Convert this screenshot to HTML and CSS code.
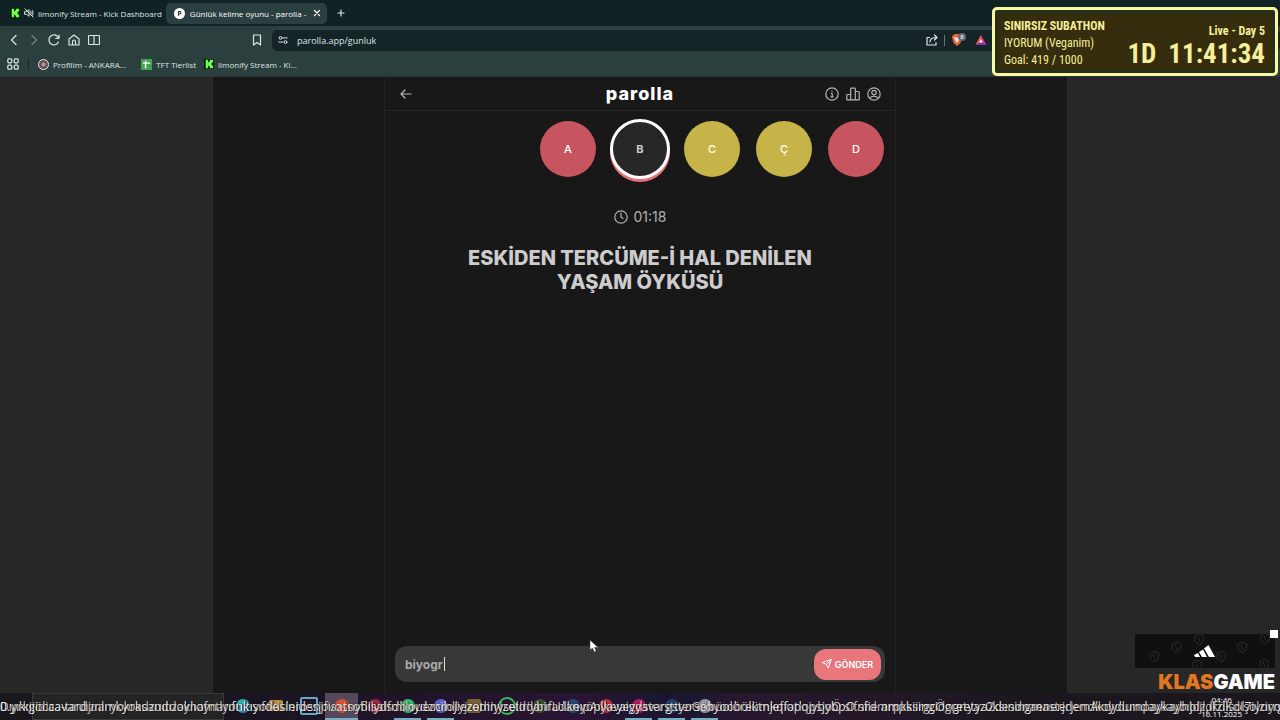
FILE: index.html
```html
<!DOCTYPE html>
<html lang="tr">
<head>
<meta charset="utf-8">
<meta name="viewport" content="width=device-width, initial-scale=1">
<title>Günlük kelime oyunu - parolla</title>
<link rel="stylesheet" href="styles.css">
</head>
<body>
<svg class="defs" aria-hidden="true">
  <symbol id="kick" viewBox="0 0 12 12"><path d="M0 0h12v12H0z" fill="#07130a"/><path d="M2 1h3v3h1V3h1V1h4v3h-1v1H9v2h1v1h1v3H7V9H6V8H5v3H2z" fill="#6bff45"/></symbol>
</svg>
<div class="screen">
  <header class="browser">
    <div class="tabs">
      <div class="tab">
        <svg class="i10"><use href="#kick"/></svg>
        <svg class="i10 line" viewBox="0 0 12 12"><path d="M1 4.500h2L6 2v8L3 7.500H1zM8 4c1 1 1 3 0 4M10 3c1 2 1 4 0 6M1 1l10 10"/></svg>
        <span class="tab-title">limonify Stream - Kick Dashboard</span>
      </div>
      <div class="tab active">
        <svg class="i11" viewBox="0 0 12 12"><circle cx="6" cy="6" r="6" fill="#fff"/><path d="M5 8.500V3.800h1.300a1.300 1.300 0 0 1 0 2.700H5" fill="none" stroke="#222" stroke-width="1.100"/></svg>
        <span class="tab-title">Günlük kelime oyunu - parolla -</span>
        <button class="bare close" aria-label="Kapat"><svg class="i8 bold" viewBox="0 0 8 8"><path d="M1.500 1.500l5 5M6.500 1.500l-5 5"/></svg></button>
      </div>
      <button class="bare" aria-label="Yeni sekme"><svg class="i8 bold" viewBox="0 0 8 8"><path d="M4 1v6M1 4h6"/></svg></button>
    </div>
    <div class="toolbar">
      <nav class="nav">
        <button class="bare" aria-label="Geri"><svg class="i12 line" viewBox="0 0 12 12"><path d="M8 1.500L3.500 6 8 10.500"/></svg></button>
        <button class="bare dim" aria-label="İleri"><svg class="i12 line" viewBox="0 0 12 12"><path d="M4 1.500L8.500 6 4 10.500"/></svg></button>
        <button class="bare" aria-label="Yenile"><svg class="i12 line" viewBox="0 0 12 12"><path d="M10.500 8A5 5 0 1 1 10.200 3.200M11 1v3.300H7.800"/></svg></button>
        <button class="bare" aria-label="Ana sayfa"><svg class="i12 line" viewBox="0 0 12 12"><path d="M1 5l5-4 5 4v6H1zM4.500 11V7.500a1.500 1.500 0 0 1 3 0V11"/></svg></button>
        <button class="bare" aria-label="Bölünmüş görünüm"><svg class="i12 line" viewBox="0 0 12 12"><rect x=".5" y="1.500" width="11" height="9" rx="1"/><path d="M6 1.500v9"/></svg></button>
      </nav>
      <button class="bare mark" aria-label="Yer imi"><svg class="i12 line" viewBox="0 0 12 12"><path d="M2.500 1h7v10L6 8.500 2.500 11z"/></svg></button>
      <div class="address">
        <svg class="i10 line" viewBox="0 0 12 12"><circle cx="3" cy="3.500" r="1.700"/><circle cx="9" cy="8.500" r="1.700"/><path d="M6 3.500h5M1 8.500h5"/></svg>
        <input class="url" aria-label="Adres" value="parolla.app/gunluk">
        <svg class="i12 line" viewBox="0 0 12 12"><path d="M3.500 3.500H1V11h9V8.500M4 8c0-3 2-4.500 6.500-4.500M8.500 1L11 3.500 8.500 6"/></svg>
        <span class="bar"></span>
        <svg class="shield" viewBox="0 0 16 14"><path d="M2 2l2-1h4l2 1 1 2-1.500 6L6 13l-3.500-3L1 4z" fill="#ec6338"/><path d="M3 4l2 .5h2L9 4l-1 3-2 3-2-3z" fill="#fff" opacity=".85"/><circle cx="11" cy="4" r="4" fill="#656b70"/><path d="M10 2.500h2v3h-2zM10 4h2" fill="none" stroke="#ddd" stroke-width=".8"/></svg>
        <svg class="i12" viewBox="0 0 12 12"><path d="M6 1l5.500 10H.5z" fill="#c8389a"/><path d="M6 1L.5 11 6 8z" fill="#ff5a3c"/><path d="M.5 11h11L6 8z" fill="#6a3aa8"/><path d="M6 5l1.800 3.400H4.200z" fill="#fff"/></svg>
      </div>
    </div>
    <nav class="bookmarks">
      <button class="bare" aria-label="Uygulamalar"><svg class="i12 line" viewBox="0 0 12 12"><rect x=".8" y=".8" width="4" height="4" rx="1"/><rect x="7.200" y=".8" width="4" height="4" rx="1"/><rect x=".8" y="7.200" width="4" height="4" rx="1"/><rect x="7.200" y="7.200" width="4" height="4" rx="1"/></svg></button>
      <span class="bar dark"></span>
      <a class="bm wide" href="#"><svg class="i11" viewBox="0 0 12 12"><circle cx="6" cy="6" r="5.500" fill="#6d5558" stroke="#eee"/><circle cx="6" cy="6" r="3" fill="#a99596" stroke="#493a3c"/></svg>Profilim - ANKARA...</a>
      <a class="bm" href="#"><svg class="i11" viewBox="0 0 12 12"><path d="M0 0h12v12H0z" fill="#43a351"/><path d="M5 2v8M2 4.500h8" stroke="#fff" stroke-width="1.600"/></svg>TFT Tierlist</a>
      <a class="bm" href="#"><svg class="i10"><use href="#kick"/></svg>limonify Stream - Ki...</a>
    </nav>
  </header>

  <main class="page">
    <div class="canvas">
      <div class="game">
        <div class="topbar">
          <button class="bare grey back" aria-label="Geri dön"><svg class="i12 line" viewBox="0 0 12 12"><path d="M11 6H1M5 2L1 6l4 4"/></svg></button>
          <h1 class="logo">parolla</h1>
          <div class="actions">
            <button class="bare grey" aria-label="Bilgi"><svg class="i14 line" viewBox="0 0 14 14"><circle cx="7" cy="7" r="6.200"/><path d="M6.300 6.500h.9v3.300M6 9.900h2.200M7 4v.6"/></svg></button>
            <button class="bare grey" aria-label="İstatistik"><svg class="i14 line" viewBox="0 0 14 14"><path d="M.8 12.800V8.300q0-.8.8-.8h3.100M4.700 12.800V2q0-.8.8-.8h3q.8 0 .8.8v10.800M9.300 4.500h3q.9 0 .9.900v7.400H.8"/></svg></button>
            <button class="bare grey" aria-label="Profil"><svg class="i14 line" viewBox="0 0 14 14"><circle cx="7" cy="7" r="6.200"/><circle cx="7" cy="5.500" r="2.200"/><path d="M2.700 11.300c2-3 6.600-3 8.600 0"/></svg></button>
          </div>
        </div>
        <div class="letters">
          <span class="letter red">A</span>
          <span class="letter current">B</span>
          <span class="letter yellow">C</span>
          <span class="letter yellow">Ç</span>
          <span class="letter red">D</span>
        </div>
        <div class="timer"><svg class="i14 line" viewBox="0 0 14 14"><circle cx="7" cy="7" r="6.200"/><path d="M7 3.200V7l2 1.500"/></svg><span>01:18</span></div>
        <h2 class="question">ESKİDEN TERCÜME-İ HAL DENİLEN YAŞAM ÖYKÜSÜ</h2>
        <form class="answer">
          <input class="field" aria-label="Cevap" value="biyogr">
          <span class="caret"></span>
          <button class="send" type="button"><svg class="i10 line" viewBox="0 0 12 12"><path d="M11 1L7.500 11 5.500 6.500 1 4.500zM11 1L5.500 6.500"/></svg>GÖNDER</button>
        </form>
      </div>
    </div>
  </main>

  <footer class="taskbar">
    <div class="search"></div>
    <div class="apps">
      <span class="app edge"></span><span class="app folder"></span><span class="app store"></span><span class="app brave on lit"></span><span class="app rose"></span><span class="app green on"></span><span class="app blue on"></span><span class="app gold"></span><span class="app ring"></span><span class="app moss"></span><span class="app navy"></span><span class="app crimson"></span><span class="app pink on"></span><span class="app deep on"></span><span class="app silver on"></span>
    </div>
    <div class="clock"><span>04:46</span><span>16.11.2025</span></div>
    <div class="ticker">
      <span class="line-a">0.yıkıgöcaavardızıamkyoksandızaklıoynarıfnitıyotkisleidesjovosnyflisalsdbnydznilojiezomiyizetiriybiradanıpAılkeyeyyavargstersenyoobölümkqfatlopsjybpO.sfie ampksingidogretya2desingmasterjendkoydumdaykaybıjdz,ıkdisol7iyorrgensimibilfriyom</span>
      <span class="line-b">Dıyrkijidica-tardjınlı yokradzuıtdoynafntlyoukısıfdesinrosnjfisatsobilydfmilouezcmllyjzetlinyselddarıfUılkeyöpyavaigdstersttyoGöbüolürektnjefiopqjyboÖ.sıfnrdmrpksiirgcÖgretyaz0ksındnaenerjdemAkdyduınpaykayhbijldfziKdIşolziyongersini.bilmiyor</span>
    </div>
  </footer>

  <aside class="subathon">
    <div class="goal"><strong>SINIRSIZ SUBATHON</strong><span>IYORUM (Veganim)</span><span>Goal: 419 / 1000</span></div>
    <div class="count"><span class="day">Live - Day 5</span><span class="time"><span>1D</span><span>11:41:34</span></span></div>
  </aside>

  <aside class="sponsor">
    <div class="banner">
      <svg class="pattern" viewBox="0 0 140 34"><g fill="none" stroke="#2b2b2b"><path id="m" d="M15 19l5-2 4 3-1 5-4 3-4-4zM18 20l2 5"/><use href="#m" x="22" y="-9"/><use href="#m" x="45" y="-17"/><use href="#m" x="43" y="9"/><use href="#m" x="67" y="0"/><use href="#m" x="88" y="-9"/><use href="#m" x="110" y="8"/><use href="#m" x="111" y="-18"/></g></svg>
      <svg class="adidas" viewBox="0 0 22 14"><path d="M0 11l4-2 2 4H1zM5 8l4-2.500L13 13H8zM10 4.500L14.500 1 21 13h-6z" fill="#fff"/></svg>
    </div>
    <div class="brand"><span>KLAS</span>GAME</div>
    <span class="handle"></span>
  </aside>
  <svg class="cursor" viewBox="0 0 10 14"><path d="M1 1v10l2.500-2 1.700 4 2-.9-1.700-3.700H9z" fill="#fff" stroke="#333" stroke-width=".5"/></svg>
</div>
</body>
</html>
```
FILE: styles.css
```css
* { box-sizing: border-box; }
body { margin: 0; background: #181818; color: #fff; font-family: "Open Sans", "Noto Sans", sans-serif; }
h1, h2 { margin: 0; }
input, button { font: inherit; color: inherit; border: 0; background: none; padding: 0; outline: 0; }
svg { display: block; flex: none; }
.defs { position: absolute; width: 0; height: 0; }
.i8 { width: 8px; height: 8px; }
.i10 { width: 10px; height: 10px; }
.i11 { width: 11px; height: 11px; }
.i12 { width: 12px; height: 12px; }
.i14 { width: 14px; height: 14px; }
.line, .bold { fill: none; stroke: currentColor; stroke-width: 1.2; stroke-linecap: round; stroke-linejoin: round; }
.bare { display: block; }
.dim { opacity: .4; }
.grey { color: #b5b5b5; }

.screen { position: relative; display: flex; flex-direction: column; min-height: 100vh; overflow: hidden; }
.browser { display: flex; flex-direction: column; height: 77px; background: #2c3f3f; color: #dce6e4; font-size: 8px; border-bottom: 1px solid #263838; }
.tabs { display: flex; align-items: center; height: 26px; background: #112224; }
.tab { display: flex; align-items: center; gap: 4px; height: 21px; padding: 0 4px 0 10px; white-space: nowrap; }
.tab.active { width: 161px; padding: 0 6px 0 8px; gap: 5px; background: #2b3f40; border-radius: 5px; color: #fff; margin-right: 10px; }
.close { margin-left: auto; }
.toolbar { display: flex; align-items: center; height: 28px; padding-left: 8px; }
.nav { display: flex; gap: 8px; }
.mark { margin-left: 151px; }
.address { flex: 1; display: flex; align-items: center; gap: 8px; height: 21px; margin-left: 9px; padding: 0 293px 0 6px; background: #152527; border-radius: 5px; }
.url { flex: 1; min-width: 0; padding-left: 1px; font-size: 9px; }
.bar { width: 1px; height: 11px; background: #66777a; margin: 0 -2px; }
.bar.dark { background: #182729; margin: 0 1px; }
.shield { width: 16px; height: 14px; }
.bookmarks { display: flex; align-items: center; gap: 8px; height: 20px; padding-left: 7px; }
.bm { display: flex; align-items: center; gap: 4px; color: inherit; text-decoration: none; }
.bm.wide { margin-right: 7px; }

.page { flex: 1; display: flex; justify-content: center; background: #272727; }
.canvas { display: flex; justify-content: center; width: 66.667%; background: #181818; }
.game { display: flex; flex-direction: column; width: 512px; padding-bottom: 11px; border: solid #222; border-width: 0 1px; font-family: Inter, sans-serif; }
.topbar { display: grid; grid-template-columns: 1fr auto 1fr; align-items: center; height: 34px; padding: 0 14px; border-bottom: 1px solid #262626; }
.back { justify-self: start; padding-left: 1px; }
.logo { font: 800 18px/24px Inter, sans-serif; letter-spacing: 1px; }
.actions { display: flex; justify-content: flex-end; gap: 7px; }
.letters { display: flex; justify-content: flex-end; align-items: center; gap: 16px; height: 76px; padding-right: 11px; }
.letter { display: flex; align-items: center; justify-content: center; width: 56px; height: 56px; border-radius: 50%; font-size: 11px; font-weight: 500; }
.red { background: #c75560; }
.yellow { background: #c6b448; }
.current { width: 60px; height: 60px; margin: 0 -2px; background: #272727; border: 3px solid #fff; box-shadow: 0 3px #e87078; color: #ccc; font-weight: 700; }
.timer { display: flex; align-items: center; justify-content: center; gap: 6px; margin-top: 20px; font-size: 14px; line-height: 20px; color: #b0b0b0; }
.question { margin-top: 19px; padding: 0 70px; text-align: center; font-size: 20px; line-height: 24px; font-weight: 800; color: #ccc; }
.answer { display: flex; align-items: center; height: 36px; margin: auto 10px 0 10px; padding: 0 4px 0 10px; border-radius: 12px; background: #383838; }
.field { width: 39px; font-size: 12px; font-weight: 700; color: #aaa; }
.caret { width: 1px; height: 14px; background: #ddd; }
.send { display: flex; align-items: center; justify-content: center; gap: 3px; margin-left: auto; width: 67px; height: 31px; border-radius: 12px; background: #e8767b; color: #fff; font-size: 9px; font-weight: 600; }

.taskbar { position: relative; display: flex; height: 27px; background: linear-gradient(90deg, #19161c, #1b1424 25%, #2b1434 45%, #191632 52%, #28172f 58%, #1c171f 80%); }
.search { width: 192px; margin-left: 32px; background: #242424; border: 1px solid #3a3a3a; }
.apps { display: flex; gap: 6px; padding-left: 5px; }
.app { display: flex; align-items: center; justify-content: center; width: 27px; border-bottom: 2px solid transparent; }
.app::before { content: ""; width: 14px; height: 14px; border-radius: 50%; background: #333; }
.app.on { border-bottom-color: #78aebe; }
.lit { width: 33px; margin: 0 -3px; background-color: #55485a; }
.edge::before { background: linear-gradient(135deg, #36c6ac, #1879c7); }
.folder::before { height: 11px; border-radius: 2px; background: #b39143; }
.store::before { background: none; border-radius: 2px; border: 2px solid #65a8ca; }
.brave::before { background: #d94f32; }
.rose::before { background: #9c2448; }
.green::before { background: #35bd70; }
.blue::before { background: #5964d4; }
.gold::before { background: #756132; border-radius: 2px; }
.ring::before { background: none; border: 2px solid #36b85b; }
.moss::before { background: #344e2e; }
.navy::before { background: #254872; }
.crimson::before { background: #b9343d; }
.pink::before { background: #b01b64; }
.deep::before { background: #234064; }
.silver::before { background: #9198ac; }
.clock { display: flex; flex-direction: column; justify-content: space-between; margin-left: auto; padding: 1px 38px 0 0; align-items: center; font-size: 8px; line-height: 12px; }
.ticker { position: absolute; inset: 0; overflow: hidden; display: grid; align-items: center; font-size: 12px; line-height: 16px; font-weight: 500; white-space: nowrap; color: #eee; text-shadow: 1px 0 1px #000; }
.line-a, .line-b { grid-area: 1 / 1; }
.line-b { opacity: .8; }

.subathon { position: absolute; top: 7px; right: 2px; display: flex; justify-content: space-between; width: 286px; height: 69px; padding: 8px 10px 8px 9px; border: 3px solid #fcf8a2; border-radius: 5px; background: #352d0d; box-shadow: inset 0 0 0 3px #22301f; color: #f5ef99; font-family: "Liberation Sans Narrow", "Roboto Condensed", "DejaVu Sans Condensed", sans-serif; font-size: 13px; }
.goal { display: flex; flex-direction: column; line-height: 17px; }
.goal strong { font-size: 12px; }
.goal span { font-size: 12px; }
.count { display: flex; flex-direction: column; align-items: flex-end; font-weight: 700; }
.day { margin-top: 5px; font-size: 12px; line-height: 16px; }
.time { display: flex; gap: 12px; font-size: 27px; line-height: 30px; }
.sponsor { position: absolute; right: 5px; bottom: 27px; width: 140px; }
.banner { position: relative; display: flex; align-items: center; justify-content: center; height: 34px; background: #101010; }
.pattern { position: absolute; inset: 0; }
.adidas { position: relative; width: 22px; height: 14px; }
.brand { margin-top: 3px; text-align: right; font: 900 20px/22px Inter, sans-serif; }
.brand span { color: #e27720; }
.handle { position: absolute; top: -4px; right: -3px; width: 8px; height: 8px; background: #fff; }
.cursor { position: absolute; left: 589px; top: 639px; width: 10px; height: 14px; }
```
